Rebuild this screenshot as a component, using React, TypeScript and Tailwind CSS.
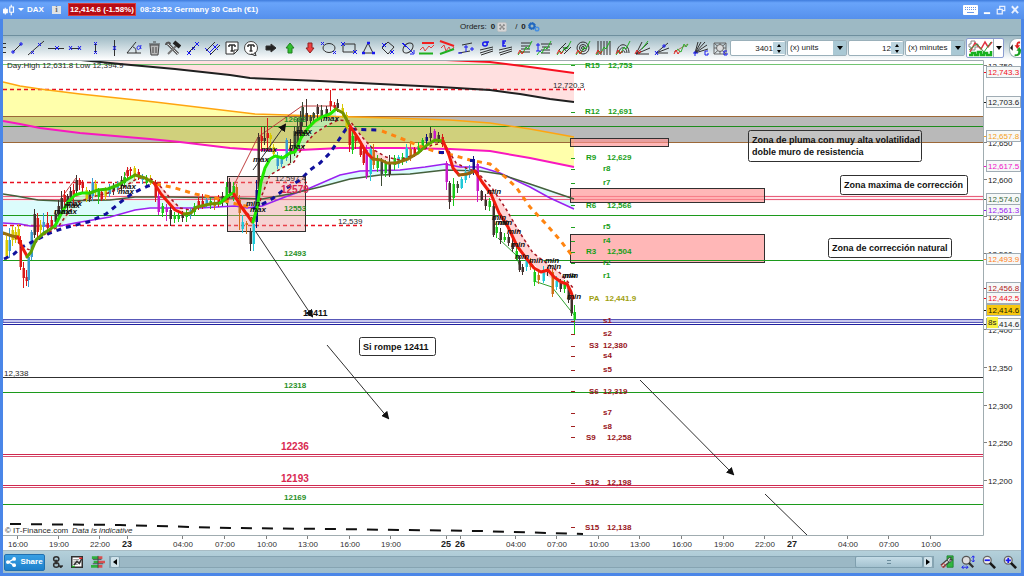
import type { ReactNode } from "react";

type Pt = [number, number];
type Candle = [x: number, high: number, top: number, bottom: number, low: number, color: string];

const K = "#40302c";
const R = "#d81818";
const G = "#18c818";
const B = "#3a9bd0";
const Y = "#d8c800";
const N = "#10107c";
const M = "#c818c8";
const O = "#d07018";
const C = "#20c8d8";
const D = "#3c4a34";

const candles: Candle[] = [
  [6, 236, 240, 256, 260, Y], [9, 228, 240, 251, 258, B], [12, 226, 230, 240, 246, Y], [15, 227, 232, 240, 243, Y], [18, 224, 229, 236, 244, Y],
  [20, 236, 240, 267, 270, R], [23, 262, 268, 278, 288, R], [26, 270, 277, 281, 286, R], [28, 253, 257, 280, 287, B],
  [31, 230, 232, 257, 260, B], [34, 209, 214, 235, 238, K], [37, 213, 218, 232, 240, R], [40, 220, 225, 230, 234, Y], [43, 213, 222, 227, 232, B], [47, 212, 223, 228, 235, R],
  [51, 216, 220, 227, 230, R], [55, 210, 214, 222, 226, K], [58, 200, 206, 217, 221, K], [61, 191, 198, 209, 213, K], [64, 190, 195, 202, 206, R], [67, 194, 196, 206, 210, K],
  [70, 187, 191, 200, 203, K], [73, 184, 190, 195, 204, R], [76, 175, 180, 191, 194, K], [79, 178, 180, 185, 190, R], [82, 180, 183, 188, 193, R], [86, 187, 190, 199, 202, Y],
  [89, 190, 192, 199, 202, K], [92, 178, 182, 196, 201, B], [95, 180, 184, 192, 197, Y], [98, 188, 191, 197, 204, G], [101, 189, 192, 199, 201, R], [105, 187, 190, 196, 200, Y],
  [109, 184, 187, 194, 197, B], [113, 183, 186, 191, 195, K], [117, 181, 184, 188, 192, B], [121, 176, 180, 186, 190, K], [124, 172, 177, 183, 187, G], [127, 167, 170, 176, 180, R],
  [130, 167, 169, 171, 178, R], [134, 166, 168, 176, 179, Y], [138, 169, 172, 177, 180, R], [142, 174, 177, 180, 184, B], [146, 175, 178, 183, 187, G], [150, 175, 178, 183, 185, Y],
  [155, 180, 184, 197, 202, R], [158, 190, 196, 212, 215, M], [162, 203, 206, 213, 217, G], [166, 204, 208, 212, 221, M], [170, 206, 210, 219, 226, K], [174, 212, 215, 219, 223, G],
  [178, 210, 216, 219, 222, G], [182, 211, 214, 218, 222, K], [186, 210, 213, 217, 222, G], [190, 208, 210, 215, 219, B], [194, 203, 206, 212, 216, G], [198, 197, 201, 208, 210, R],
  [202, 194, 201, 205, 209, R], [206, 195, 200, 206, 208, B], [210, 198, 201, 205, 209, G], [214, 198, 202, 206, 210, O], [218, 195, 199, 204, 207, R], [222, 192, 196, 202, 206, K],
  [226, 182, 187, 199, 204, G], [229, 178, 182, 193, 198, K], [233, 182, 186, 198, 201, G], [236, 184, 187, 196, 199, O], [239, 195, 200, 213, 230, O], [242, 215, 222, 229, 233, C],
  [246, 221, 223, 225, 234, O], [250, 228, 231, 244, 251, K], [253, 220, 224, 244, 251, C], [256, 180, 190, 222, 228, N], [258, 133, 137, 189, 205, K], [261, 127, 136, 141, 150, R],
  [264, 127, 138, 141, 145, K], [267, 118, 133, 138, 150, R], [270, 133, 135, 139, 148, Y], [273, 144, 147, 154, 158, Y], [277, 152, 158, 166, 169, B], [281, 155, 158, 164, 167, B], [286, 138, 140, 158, 161, B],
  [290, 139, 148, 154, 163, K], [294, 126, 131, 153, 156, D], [297, 118, 126, 146, 150, D], [300, 111, 118, 133, 138, K], [302, 102, 107, 122, 126, D], [306, 99, 113, 121, 126, K],
  [310, 115, 117, 121, 124, D], [313, 112, 113, 118, 122, D], [317, 104, 107, 114, 118, K], [321, 105, 110, 118, 122, D], [326, 106, 109, 115, 119, K], [330, 90, 101, 106, 111, R],
  [334, 102, 105, 108, 111, R], [337, 99, 103, 108, 112, K], [342, 104, 108, 113, 118, Y], [346, 112, 115, 129, 132, Y], [349, 124, 128, 145, 152, R], [352, 130, 136, 150, 154, G],
  [355, 132, 136, 141, 149, R], [360, 141, 146, 155, 157, R], [363, 145, 151, 163, 165, R], [366, 145, 150, 176, 179, M], [370, 145, 149, 174, 181, C], [373, 144, 150, 165, 169, O],
  [377, 155, 160, 168, 172, G], [381, 158, 161, 174, 186, D], [385, 160, 163, 173, 177, G], [389, 155, 163, 174, 177, K], [394, 155, 158, 165, 170, G], [398, 155, 157, 164, 168, C],
  [402, 153, 157, 162, 165, G], [406, 144, 148, 160, 163, C], [410, 144, 149, 156, 161, O], [414, 147, 149, 154, 157, R], [418, 142, 146, 150, 154, G], [422, 138, 140, 146, 150, G],
  [426, 134, 137, 141, 148, N], [430, 127, 133, 138, 142, K], [434, 129, 131, 139, 143, M], [438, 132, 135, 139, 143, K], [442, 134, 137, 141, 147, R], [446, 161, 163, 182, 190, M],
  [449, 181, 183, 202, 209, K], [453, 178, 184, 198, 206, G], [457, 181, 184, 188, 193, D], [461, 177, 179, 188, 189, C], [465, 168, 172, 180, 183, C], [469, 165, 170, 175, 178, B],
  [473, 156, 160, 171, 175, N], [477, 162, 164, 191, 202, M], [481, 190, 191, 200, 201, K], [485, 194, 200, 206, 210, K], [489, 198, 201, 207, 211, G], [493, 200, 206, 235, 237, K],
  [496, 222, 227, 233, 238, G], [500, 228, 232, 240, 244, K], [504, 233, 237, 240, 242, G], [508, 234, 237, 243, 246, K], [512, 238, 243, 249, 252, K], [516, 246, 251, 258, 260, G],
  [519, 256, 261, 270, 272, K], [522, 264, 267, 272, 275, K], [526, 256, 259, 267, 271, C], [530, 258, 261, 267, 270, O], [534, 268, 272, 282, 286, G], [538, 270, 275, 280, 284, O],
  [543, 266, 270, 281, 283, C], [547, 267, 269, 272, 276, K], [552, 268, 272, 294, 297, O], [556, 276, 281, 287, 290, C], [560, 279, 283, 289, 292, K], [564, 280, 283, 289, 293, G],
  [568, 284, 288, 300, 303, K], [571, 295, 297, 313, 316, K], [574, 305, 312, 320, 334, G],
];

const line = (pts: Pt[]) => pts.map((p) => p.join(",")).join(" ");
const area = (a: Pt[], b: Pt[]) => line([...a, ...[...b].reverse()]);

const redTop: Pt[] = [[446, 60], [490, 62], [530, 67], [574, 73]];
const blackTop: Pt[] = [[81, 60], [120, 64], [175, 69], [230, 75], [250, 78], [320, 81], [380, 84], [440, 87], [490, 90], [520, 94], [550, 99], [574, 102]];
const orange: Pt[] = [[3, 82], [20, 86], [40, 89], [80, 94], [155, 102], [230, 111], [255, 114], [320, 116], [390, 118], [450, 120], [490, 123], [530, 129], [574, 137]];
const magenta: Pt[] = [[3, 121], [20, 124], [40, 128], [80, 133], [150, 139], [180, 142], [230, 148], [260, 150], [300, 150], [340, 148], [400, 148], [450, 149], [490, 151], [530, 158], [574, 167]];
const purple: Pt[] = [[3, 223], [20, 224], [30, 226], [60, 226], [75, 223], [110, 217], [135, 210], [150, 208], [200, 208], [235, 206], [247, 208], [262, 206], [285, 197], [310, 188], [340, 175], [360, 171], [400, 170], [425, 167], [445, 164], [460, 167], [480, 167], [500, 173], [530, 187], [550, 198], [574, 209]];
const olive: Pt[] = [[3, 194], [16, 196], [38, 200], [60, 201], [110, 200], [135, 197], [170, 197], [230, 198], [262, 199], [290, 194], [320, 187], [350, 179], [380, 175], [410, 174], [445, 170], [480, 171], [500, 174], [530, 184], [574, 199]];

const average: { color: string; pts: Pt[] }[] = [
  { color: "#98700c", pts: [[3, 233], [12, 236], [18, 237]] },
  { color: "#f01c0c", pts: [[18, 237], [22, 247], [27, 256]] },
  { color: "#5fa000", pts: [[27, 257], [31, 252], [36, 240], [44, 233], [55, 226]] },
  { color: "#20e800", pts: [[55, 226], [61, 214], [68, 202], [75, 195], [82, 193], [90, 193]] },
  { color: "#38c000", pts: [[90, 193], [98, 190], [108, 189], [118, 185], [128, 179], [135, 175]] },
  { color: "#749000", pts: [[135, 175], [145, 178], [154, 183]] },
  { color: "#f01c0c", pts: [[154, 183], [161, 194], [168, 202], [175, 210], [184, 214]] },
  { color: "#749000", pts: [[184, 214], [191, 213], [197, 207], [210, 204], [220, 203], [226, 199]] },
  { color: "#20e800", pts: [[220, 203], [226, 197], [233, 193]] },
  { color: "#f01c0c", pts: [[234, 194], [240, 205], [248, 216], [252, 222]] },
  { color: "#20e800", pts: [[253, 222], [257, 208], [261, 182], [265, 168], [270, 159], [275, 156], [283, 158], [290, 153], [295, 152], [301, 138], [308, 128], [315, 121], [322, 117], [330, 114], [336, 109]] },
  { color: "#749000", pts: [[336, 109], [343, 113], [350, 126]] },
  { color: "#f01c0c", pts: [[350, 126], [358, 138], [366, 152], [373, 159]] },
  { color: "#98700c", pts: [[373, 159], [381, 160], [387, 163], [396, 163], [408, 159], [418, 153]] },
  { color: "#58a800", pts: [[418, 153], [427, 145], [435, 140], [443, 141]] },
  { color: "#f01c0c", pts: [[443, 141], [449, 155], [453, 168], [459, 175]] },
  { color: "#98600c", pts: [[459, 175], [467, 174], [475, 171]] },
  { color: "#f01c0c", pts: [[475, 171], [482, 182], [491, 194], [499, 213], [508, 227], [517, 246], [526, 258], [534, 268], [541, 272], [548, 270], [554, 277], [561, 282], [567, 284], [571, 292], [573, 298]] },
];

const fastDots: Pt[][] = [
  [[3, 234], [14, 236], [22, 247], [30, 250], [40, 237], [58, 227], [68, 213], [78, 202], [92, 197], [108, 193], [124, 187], [138, 178], [150, 178], [160, 186], [170, 198], [180, 208], [190, 210], [204, 206], [222, 202], [234, 196], [246, 212], [254, 220], [262, 195], [270, 175], [282, 168], [294, 162], [302, 148], [314, 134], [326, 126], [338, 120], [350, 121], [362, 137], [374, 150], [386, 157], [400, 160], [416, 154], [432, 145], [444, 143], [456, 163], [466, 168], [477, 172], [492, 188], [506, 209], [520, 233], [533, 253], [545, 262], [560, 273], [574, 289]],
];
const blueDots: Pt[][] = [
  [[4, 259], [14, 254], [22, 247], [34, 241], [50, 233], [64, 228], [88, 222], [106, 214], [122, 201], [133, 193], [148, 186], [155, 184]],
  [[253, 209], [272, 199], [285, 189], [300, 180], [310, 170], [320, 163], [330, 153], [338, 141], [346, 129], [378, 130]],
];
const orangeDots: Pt[][] = [
  [[156, 184], [175, 188], [195, 194], [216, 198], [232, 203], [250, 207]],
  [[382, 131], [400, 138], [422, 147], [434, 151], [452, 155], [470, 160], [490, 164], [504, 176], [516, 187], [530, 207], [545, 223], [560, 240], [574, 258]],
];

const marks: [number, number, string][] = [
  [120, 189, "max"], [118, 194, "max"], [66, 206, "max"], [64, 208, "max"], [54, 214, "max"], [61, 214, "max"],
  [261, 152, "max"], [253, 162, "max"], [246, 206, "min"], [250, 212, "max"], [296, 134, "max"], [294, 136, "max"], [289, 149, "max"], [323, 121, "max"],
  [487, 194, "min"], [492, 220, "min"], [495, 225, "min"], [498, 225, "min"], [507, 234, "min"], [511, 247, "min"], [515, 259, "min"], [529, 263, "min"], [545, 263, "min"], [547, 269, "min"], [562, 278, "min"], [564, 278, "min"], [567, 299, "min"],
];

const pivots: [number, number, string, number, string][] = [
  [585, 68, "R15", 608, "12,753"], [585, 114, "R12", 608, "12,691"], [586, 160, "R9", 607, "12,629"], [586, 208, "R6", 607, "12,566"], [586, 254, "R3", 607, "12,504"],
  [589, 348, "S3", 603, "12,380"], [589, 394, "S6", 603, "12,319"], [586, 440, "S9", 607, "12,258"], [585, 485, "S12", 607, "12,198"], [585, 530, "S15", 607, "12,138"],
];
const minors: [number, string][] = [
  [171, "r8"], [185, "r7"], [229, "r5"], [243, "r4"], [265, "r2"], [278, "r1"], [323, "s1"], [336, "s2"], [358, "s4"], [372, "s5"], [415, "s7"], [429, "s8"],
];
const ticksGreen = [65, 112, 158, 169, 183, 205, 227, 241, 252, 263, 276];
const ticksRed = [321, 334, 346, 356, 370, 391, 413, 426, 437, 483, 527];

const levels: [number, string][] = [
  [64, "#72c472"], [126, "#1c8c1c"], [215, "#1c9a1c"], [260, "#1c9a1c"], [392, "#1c9a1c"], [504, "#1c9a1c"],
  [377, "#303030"], [454, "#d02850"], [456, "#d85070"], [485, "#d02850"], [487, "#d85070"],
];

const prices: [number, string][] = [
  [66, "12,750"], [143, "12,650"], [180, "12,600"], [217, "12,550"], [254, "12,500"], [330, "12,400"],
  [368, "12,350"], [406, "12,300"], [443, "12,250"], [481, "12,200"],
];
const priceTags: [number, string, string, string][] = [
  [72, "12,743.3", "#f01020", "#f6f8f8"], [102, "12,703.6", "#202020", "#f6f8f8"], [136, "12,657.8", "#f5a020", "#f6f8f8"], [166, "12,617.5", "#f010c8", "#f6f8f8"],
  [199, "12,574.0", "#3c6a3c", "#f6f8f8"], [210, "12,561.3", "#9818f0", "#f6f8f8"], [259, "12,493.9", "#ff8020", "#f6f8f8"], [288, "12,456.8", "#b01820", "#f6f8f8"],
  [298, "12,442.5", "#f01020", "#f6f8f8"], [324, "12,414.6", "#202020", "#f6f8f8"], [310, "12,414.6", "#201800", "#f8c810"],
];
const times: [number, string][] = [
  [18, "16:00"], [59, "19:00"], [100, "22:00"], [183, "04:00"], [225, "07:00"], [267, "10:00"], [308, "13:00"], [350, "16:00"], [391, "19:00"], [516, "04:00"], [557, "07:00"],
  [599, "10:00"], [640, "13:00"], [682, "16:00"], [724, "19:00"], [765, "22:00"], [848, "04:00"], [889, "07:00"], [931, "10:00"],
];
const days: [number, string][] = [[127, "23"], [446, "25"], [460, "26"], [792, "27"]];

const arrows: [number, number, number, number][] = [
  [253, 170, 285, 125], [256, 232, 312, 316], [327, 345, 388, 418], [640, 380, 733, 474],
];

function Note({ x, y, w, h, opacity = 1, lines }: { x: number; y: number; w: number; h: number; opacity?: number; lines: string[] }) {
  return (
    <g>
      <rect x={x} y={y} width={w} height={h} rx="2" fill="#ffffff" fillOpacity={opacity} stroke="#303030" />
      {lines.map((t, i) => (
        <text key={t} x={x + 3.5} y={y + 12.5 + i * 12} fontSize="9" fontWeight="700" fill="#101010">{t}</text>
      ))}
    </g>
  );
}

function Chart() {
  return (
    <svg viewBox="3 60 1018 490" className="block h-auto w-full bg-white" role="img" aria-label="Germany 30 Cash 12 minute chart" fontFamily="'Liberation Sans', Arial, sans-serif" fontSize="8">
      <defs>
        <marker id="head" viewBox="0 0 8 8" refX="6" refY="4" markerWidth="8" markerHeight="8" markerUnits="userSpaceOnUse" orient="auto">
          <path d="M0 0 L8 4 L0 8Z" fill="#101010" />
        </marker>
        <clipPath id="plot"><rect x="3" y="60" width="980" height="475" /></clipPath>
      </defs>
      <g clipPath="url(#plot)">
        <polygon points={`81,60 ${line(redTop)} ${line([...blackTop].reverse())}`} fill="#ffe0e0" />
        <rect x="3" y="116" width="980" height="27" fill="#b9b9b9" />
        <polygon points={area(orange, magenta)} fill="#ffff00" opacity="0.33" />
        <polygon points={area(purple, olive)} fill="#dcfcfc" />
        <path d="M3 116.500H983M3 142.500H983" stroke="#9c6838" />
        {levels.map(([y, c]) => <path key={y} d={`M3 ${y + 0.5}H983`} stroke={c} />)}
        <rect x="3" y="195" width="980" height="6" fill="#ffe4ea" opacity="0.6" />
        <path d="M3 196.500H983M3 199.500H983" stroke="#e8607c" />
        <rect x="3" y="319.500" width="980" height="3" fill="#c8c8f0" stroke="#5858b8" />
        <path d="M3 324.500H983" stroke="#2020a0" />
        <path d="M3 89.500H585M3 182.500H307M3 225.500H362" stroke="#e81020" strokeWidth="1.500" strokeDasharray="4 3" />
        <path d="M10 524 L120 525 L230 528 L330 529 L480 531 L583 534" fill="none" stroke="#101010" strokeWidth="2" strokeDasharray="11 10" />

        <polygon points="57,226 64,210 76,197 92,193 134,176 138,180 108,194 80,202 62,224" fill="#c8f4d0" opacity="0.8" />
        <polygon points="254,220 262,180 270,160 282,158 295,152 308,129 336,110 336,121 314,134 302,148 292,163 270,175" fill="#b8f4c0" opacity="0.7" />
        <polygon points="154,183 175,210 186,213 175,203 162,187" fill="#ffd4d4" />
        <polygon points="346,117 360,143 375,159 392,161 374,150 362,136" fill="#ffd4d4" />
        <polygon points="443,141 453,170 466,168 477,172 499,213 517,246 540,271 572,292 560,273 533,253 506,209 477,172 455,163" fill="#ffd4d4" />

        <rect x="227.500" y="176.500" width="78" height="55" fill="#e89090" fillOpacity="0.4" stroke="#303030" />
        <g fill="#ff9090" fillOpacity="0.65" stroke="#303030">
          <rect x="570.500" y="138.500" width="98" height="8" />
          <rect x="570.500" y="188.500" width="194" height="14" />
          <rect x="570.500" y="234.500" width="194" height="28" />
        </g>
        <path d="M571 260.500H765" stroke="#1c9a1c" />

        <polyline points={line(redTop)} fill="none" stroke="#f81020" strokeWidth="2" />
        <polyline points={line(blackTop)} fill="none" stroke="#202020" strokeWidth="2" />
        <polyline points={line(orange)} fill="none" stroke="#ffa510" strokeWidth="1.500" />
        <polyline points={line(magenta)} fill="none" stroke="#f818c0" strokeWidth="2" />
        <polyline points={line(purple)} fill="none" stroke="#9a20f0" strokeWidth="1.500" />
        <polyline points={line(olive)} fill="none" stroke="#44603c" strokeWidth="1.500" />

        <path d="M62 197 L76 178 M122 183 L128 168 M233 187 L258 137 L302 106 L335 106" fill="none" stroke="#c04040" />
        <path d="M498 238 L516 255 L520 267 M534 281 L552 287 L574 315" fill="none" stroke="#30a030" />
        {candles.map(([x, hi, top, bottom, lo, c], i) => (
          <g key={i}>
            <path d={`M${x + 0.5} ${hi}V${lo}`} stroke={c} />
            <rect x={x - 0.5} y={top} width="2.500" height={bottom - top} fill={c} />
          </g>
        ))}
        {blueDots.map((p, i) => <polyline key={i} points={line(p)} fill="none" stroke="#10109c" strokeWidth="3" strokeDasharray="5 5" />)}
        {orangeDots.map((p, i) => <polyline key={i} points={line(p)} fill="none" stroke="#ff8410" strokeWidth="3" strokeDasharray="5 5" />)}
        <path d="M439 152.500h5M470 160.500h5" stroke="#10109c" strokeWidth="3" />
        {fastDots.map((p, i) => <polyline key={i} points={line(p)} fill="none" stroke="#a81420" strokeWidth="1.500" strokeDasharray="3 3" />)}
        {average.map((a, i) => <polyline key={i} points={line(a.pts)} fill="none" stroke={a.color} strokeWidth="3" strokeLinejoin="round" strokeLinecap="round" />)}

        {arrows.map(([a, b, c, d]) => <path key={a} d={`M${a} ${b}L${c} ${d}`} stroke="#303030" markerEnd="url(#head)" />)}
        <path d="M765 494L807 535" stroke="#303030" />

        <path d={ticksGreen.map((y) => `M571 ${y + 0.5}h4`).join("")} stroke="#20a020" />
        <path d={ticksRed.map((y) => `M571 ${y + 0.5}h4`).join("")} stroke="#a02020" />
      </g>

      <g fontWeight="700" fontStyle="italic" fill="#101010">
        {marks.map(([x, y, t], i) => <text key={i} x={x} y={y}>{t}</text>)}
      </g>
      <g fontWeight="700">
        {pivots.map(([x, y, n, vx, v]) => (
          <g key={n} fill={n[0] === "R" ? "#18a018" : "#981420"}>
            <text x={x} y={y}>{n}</text>
            <text x={vx} y={y}>{v}</text>
          </g>
        ))}
        {minors.map(([y, t]) => <text key={t} x="603" y={y} fill={t[0] === "r" ? "#18a018" : "#981420"}>{t}</text>)}
        <g fill="#a0a010"><text x="589" y="301">PA</text><text x="605" y="301">12,441.9</text></g>
        <g fill="#289028">
          <text x="284" y="122">12682</text>
          <text x="284" y="211">12553</text>
          <text x="284" y="256">12493</text>
          <text x="284" y="388">12318</text>
          <text x="284" y="500">12169</text>
        </g>
        <g fill="#d82850" fontSize="10">
          <text x="281" y="193">12579</text>
          <text x="281" y="450">12236</text>
          <text x="281" y="482">12193</text>
        </g>
        <text x="303" y="316" fontSize="9" fill="#101010">12411</text>
      </g>
      <g fill="#282828">
        <text x="7" y="68">Day:High 12,631.8 Low 12,394.9</text>
        <text x="553" y="88">12,720.3</text>
        <text x="275" y="181">12,597.4</text>
        <text x="338" y="224">12,539</text>
        <text x="4" y="376">12,338</text>
        <text x="5" y="533">© IT-Finance.com</text>
        <text x="72" y="533" fontStyle="italic">Data is indicative</text>
      </g>

      <Note x={748.5} y={130.5} w={173} h={31} opacity={0.15} lines={["Zona de pluma con muy alta volatilidad", "doble muro de resistencia"]} />
      <Note x={840.5} y={175.5} w={127} h={19} lines={["Zona maxima de corrección"]} />
      <Note x={828.5} y={238.5} w={123} h={19} lines={["Zona de corrección natural"]} />
      <Note x={359.5} y={337.5} w={76} h={18} lines={["Si rompe 12411"]} />

      <path d="M3 60.500H983.500V535.500H3" fill="none" stroke="#a0acb0" />
      {prices.map(([y, t]) => (
        <g key={t}>
          <path d={`M984 ${y - 0.5}h3`} stroke="#808080" />
          <text x="988" y={y + 3} fill="#202020">{t}</text>
        </g>
      ))}
      {priceTags.map(([y, t, c, bg]) => (
        <g key={t + y}>
          <path d={`M984 ${y + 0.5}h3`} stroke={c} />
          <rect x="986.500" y={y - 5.5} width="34" height="11" fill={bg} stroke="#a0acb4" />
          <text x="988" y={y + 3} fill={c}>{t}</text>
        </g>
      ))}
      <rect x="987" y="317" width="11" height="11" fill="#f8f040" />
      <text x="988" y="325" fill="#202020">8s</text>
      {times.map(([x, t]) => (
        <g key={x}>
          <path d={`M${x - 0.5} 536v3`} stroke="#808080" />
          <text x={x} y="547" textAnchor="middle" fill="#303030">{t}</text>
        </g>
      ))}
      {days.map(([x, t]) => (
        <g key={x}>
          <path d={`M${x + 0.5} 536v3`} stroke="#808080" />
          <text x={x} y="547" textAnchor="middle" fontWeight="700" fontSize="9" fill="#202020">{t}</text>
        </g>
      ))}
    </svg>
  );
}

const blue = "#1818f0";
const zig = <path d="M1 15l3-4 2 2 3-6 2 2 4-8" stroke="#20b020" />;
const zigRed = <path d="M1 14l2-4 2 4 2-3" stroke="#e02020" />;

const tools: [string, ReactNode][] = [
  ["Segment", <><path d="M4 12l8-8" /><path d="M2 12h4M4 10v4M10 4h4M12 2v4" stroke={blue} /></>],
  ["Line", <><path d="M0 15L16 1" /><path d="M3 11l3 3M6 11l-3 3M10 3l3 3M13 3l-3 3" stroke={blue} /></>],
  ["Horizontal line", <><path d="M0 8.500h16" /><path d="M7 6l4 4M11 6l-4 4" stroke={blue} /></>],
  ["Horizontal segment", <><path d="M3 8.500h10" /><path d="M2 6l3 4M5 6l-3 4M11 6l3 4M14 6l-3 4" stroke={blue} /></>],
  ["Vertical segment", <><path d="M8.500 4v9" /><path d="M7 2l3 3M10 2l-3 3M7 11l3 3M10 11l-3 3" stroke={blue} /></>],
  ["Vertical line", <><path d="M8.500 0v16" /><path d="M7 6l3 4M10 6l-3 4" stroke={blue} /></>],
  ["Angle", <><path d="M10 2L1 13h14M7 7c3 1 3 3 3 6" /><path d="M15 5c-1 6-4 5-4 3s3-4 4 1" stroke={blue} /></>],
  ["Delete", <><path d="M4 5h9l-1 10H5z" fill="#b8b8b8" stroke="#444" /><path d="M3 4h11M7 2h3M7 7v6M10 7v6" stroke="#444" /></>],
  ["Settings", <><path d="M3 4l10 10" stroke="#555" strokeWidth="3" /><path d="M3 4l10 10" stroke="#ddd" /><path d="M13 4L3 14" stroke="#777" strokeWidth="2" /><path d="M9 2l6 5" stroke="#222" strokeWidth="4" /><path d="M1 5c0-3 4-3 4-1" stroke="#555" strokeWidth="2" /></>],
  ["Regression", <><path d="M4 12l8-8" /><path d="M2 11l4 4M6 11l-4 4M10 2l4 4M14 2l-4 4M7 7l3 3M10 7l-3 3" stroke={blue} /></>],
  ["Parallel lines", <><path d="M2 11L11 2M6 15l10-10" /><path d="M1 8l6 6M5 13l9-9M9 5l5 5" stroke={blue} /></>],
  ["Text", <><path d="M2 2h12v8l-4 4H2z" fill="#fff" /><path d="M14 10h-4v4" /><path d="M5 5h6M8 5v6M6.500 11h3M5 5v2M11 5v2" strokeWidth="1.500" /></>],
  ["Text bubble", <><circle cx="8" cy="8" r="6.500" fill="#fff" stroke="#444" /><path d="M5 5h6M8 5v6M6.500 11h3M5 5v2M11 5v2" strokeWidth="1.500" /><path d="M8 14l5 2-1-4" /></>],
  ["Arrow right", <path d="M3 6h5V4l5 4-5 4v-2H3z" fill="#222" />],
  ["Arrow up", <path d="M8 3l4 5h-2v5H6V8H4z" fill="#30c030" stroke="#208020" />],
  ["Arrow down", <path d="M8 13l4-5h-2V3H6v5H4z" fill="#f04040" stroke="#902020" />],
  ["Ellipse", <><ellipse cx="8" cy="8" rx="6" ry="4.500" /><path d="M0 2l3 3M3 2l-3 3M12 11l3 3M15 11l-3 3" stroke={blue} /></>],
  ["Rectangle", <><path d="M2 4h12v8H2z" /><path d="M0 2l4 4M4 2L0 6M12 10l4 4M16 10l-4 4" stroke={blue} /></>],
  ["Triangle", <><path d="M8 3l5 10H3z" /><path d="M7 3h3M2 13h3M12 13h3" stroke={blue} strokeWidth="2.500" /></>],
  ["Rotated rectangle", <><path d="M8 2l6 5-6 7-6-6z" /><path d="M2 3l4 4M6 3L2 7M10 10l4 4M14 10l-4 4" stroke={blue} /></>],
  ["Rotated ellipse", <><ellipse cx="8" cy="8" rx="6" ry="4" transform="rotate(-45 8 8)" /><path d="M2 3l4 4M3 3l10 10M10 14h4v-4" stroke={blue} /></>],
  ["Support", <><path d="M1 10l3-3 2 4 4-5 2 2 3-3" stroke="#e04040" /><path d="M3 3h12" stroke="#f02020" strokeWidth="2" /><path d="M0 13.500h14" stroke="#20b020" strokeWidth="2" /></>],
  ["Wedge", <><path d="M2 8l3-3 2 6 3-4 2 4 3-4" stroke="#e04040" /><path d="M1 1l14 5" stroke="#f02020" strokeWidth="2" /><path d="M1 14l14-5" stroke="#20b020" strokeWidth="2" /></>],
  ["Channel", <><path d="M4 5l10-2M1 13l11-2" /><path d="M8 5v7M6 7h4M12 9h4M14 7v4M0 13h4" stroke={blue} /></>],
  ["Standard deviation channel", <><path d="M2 10l13-3M2 13l13-4M3 15l12-4" /><path d="M11 2H7C4 2 4 6 7 6s3-4 0-4" stroke={blue} strokeWidth="1.500" /></>],
  ["Standard error channel", <><path d="M2 10l13-3M2 13l13-4M3 15l12-4" /><path d="M9 1H6v2h2H6v3h3" stroke={blue} strokeWidth="1.500" /></>],
  ["Fibonacci retracement", <><path d="M4 3h10M4 6h9M4 9h9M3 12h10" />{zig}{zigRed}</>],
  ["Fibonacci extension", <><path d="M5 4h11M6 7h8M5 10h9M5 13h9" />{zig}<path d="M2 3v8M0 5h4M0 11h5" stroke={blue} /></>],
  ["Pitchfork", <><path d="M3 10l7-7M5 13l8-8M8 14l7-7M6 6l5 6" />{zig}{zigRed}</>],
  ["Fibonacci circles", <><circle cx="8" cy="8" r="6" /><circle cx="8" cy="8" r="3.500" /><circle cx="8" cy="8" r="1.500" />{zig}{zigRed}</>],
  ["Fibonacci time zones", <><path d="M3 1v14M6 1v14M9 1v14M12 1v14M15 1v14" />{zig}{zigRed}</>],
  ["Fibonacci arcs", <><path d="M2 13c0-11 12-11 12 0M4 13c0-7 8-7 8 0M7 13c0-3 3-3 3 0" />{zig}{zigRed}</>],
  ["Fan lines", <><path d="M2 14L14 3M2 14l14-6M2 14h13M2 14L8 2" />{zigRed}<path d="M8 9l6-8" stroke="#20b020" /></>],
  ["Speed lines", <><path d="M2 13L14 3M2 13l13-5M2 13h12" /><path d="M1 11l3 4M4 11l-3 4M8 6h4M10 4v4" stroke={blue} /></>],
  ["Elliott wave", <><path d="M1 12l14-8" stroke="#a07050" />{zigRed}<path d="M4 9l4 3 3-8 2 3 2-3" stroke="#30b030" /></>],
  ["Gann fan", <><path d="M2 13L5 2M2 13L8 2M2 13L12 2M2 13l12-8M2 13l13-4" /><path d="M0 13h5M2 11v5M15 11h-3v4h3v-2" stroke={blue} /></>],
  ["Gann square", <><path d="M2 3h12v11H2zM2 3l12 11M14 3L2 14M8 3v11M2 8h12" stroke="#666" /><circle cx="8" cy="8" r="3.500" fill="#ddd" stroke="#666" /><path d="M15 11h-3v4h3v-2" stroke={blue} /></>],
];

function Icon({ children, className = "size-4" }: { children: ReactNode; className?: string }) {
  return <svg viewBox="0 0 16 16" className={`${className} shrink-0`} fill="none" stroke="#303030" aria-hidden="true">{children}</svg>;
}

function NumberBox({ label, value }: { label: string; value: string }) {
  return (
    <div className="flex h-4 w-14 shrink-0 items-center rounded-xs border border-[#9ab0ba] bg-white">
      <input aria-label={label} defaultValue={value} className="h-full w-10 min-w-0 flex-1 bg-transparent text-right text-[8px] outline-none" />
      <div className="flex h-3 w-3 flex-col bg-[#bcd4de]">
        <button aria-label={`Increase ${label}`} className="flex flex-1 items-center justify-center"><svg viewBox="0 0 4 3" className="h-[3px] w-1"><path d="M0 3L2 0l2 3z" /></svg></button>
        <button aria-label={`Decrease ${label}`} className="flex flex-1 items-center justify-center"><svg viewBox="0 0 4 3" className="h-[3px] w-1"><path d="M0 0l2 3 2-3z" /></svg></button>
      </div>
    </div>
  );
}

function UnitSelect({ label, text }: { label: string; text: string }) {
  return (
    <div className="grid h-4 w-[60px] shrink-0 grid-cols-[1fr_13px] items-center rounded-xs border border-[#9ab0ba] bg-white">
      <select aria-label={label} className="col-span-2 col-start-1 row-start-1 h-full w-full appearance-none bg-transparent pl-0.5 text-[8px] outline-none">
        <option>{text}</option>
      </select>
      <span className="pointer-events-none col-start-2 row-start-1 flex h-3.5 items-center justify-center bg-[#a9c8d4]">
        <svg viewBox="0 0 6 4" className="h-1 w-1.5"><path d="M0 0h6L3 4z" /></svg>
      </span>
    </div>
  );
}

function TitleBar() {
  return (
    <header className="flex h-[19px] items-center bg-linear-to-b from-[#3f7cdc] via-[#69a4fa] via-15% to-[#5590ec] pr-1 pl-[3px] text-[8px] font-bold text-white">
      <Icon className="h-4 w-3"><path d="M3 5v9M11 1v14" stroke="#fff" strokeWidth="1.500" /><path d="M0 7h6v5H0z" fill="#fff" stroke="#fff" /><path d="M9 4h5v7H9z" stroke="#fff" fill="#6aa0f4" strokeWidth="1.500" /></Icon>
      <svg viewBox="0 0 6 3" className="ml-[3px] h-[3px] w-1.5" fill="#fff"><path d="M0 0h6L3 3z" /></svg>
      <span className="ml-[3px]">DAX</span>
      <button aria-label="Information" className="ml-2 flex h-2 w-[9px] items-center justify-center bg-[#dfe3e6] font-serif text-[8px] leading-none text-[#666]">i</button>
      <span className="ml-[7px] border border-[#d84040] bg-[#b80c14] px-px leading-[11px]">12,414.6 (-1.58%)</span>
      <span className="ml-1">08:23:52 Germany 30 Cash (€1)</span>
      <div className="ml-auto flex items-center gap-1">
        <button aria-label="Keyboard">
          <svg viewBox="0 0 15 10" className="h-2.5 w-[15px]"><rect width="15" height="10" rx="1" fill="#fff" /><path d="M2 2.500h11M2 4.500h11" stroke="#6898e8" strokeDasharray="1 1" /><path d="M4 7.500h7" stroke="#6898e8" /></svg>
        </button>
        <button aria-label="Minimize"><Icon className="size-2.5"><path d="M3 13h10" stroke="#fff" strokeWidth="3" /></Icon></button>
        <button aria-label="Restore"><Icon className="size-2.5"><path d="M6 6V2h8v7h-4M2 7h8v7H2z" stroke="#e8f0ff" strokeWidth="2" /></Icon></button>
        <button aria-label="Close"><Icon className="size-2.5"><path d="M3 2l10 11M13 2L3 13" stroke="#e8f0ff" strokeWidth="3" /></Icon></button>
      </div>
    </header>
  );
}

function OrdersBar() {
  return (
    <div className="flex h-4 items-center bg-[#9db9c4] pl-[457px] text-[8px] text-[#202020]">
      <span>Orders:</span>
      <b className="ml-1">0</b>
      <button aria-label="Cancel orders" className="ml-0.5"><Icon className="size-2.5"><rect x="1" y="1" width="14" height="14" rx="2" fill="#d8d8d8" stroke="#c0c0c0" /><path d="M4 4l8 8M12 4l-8 8" stroke="#888" strokeWidth="3" strokeDasharray="3 1" /></Icon></button>
      <span className="ml-2">/</span>
      <b className="ml-1">0</b>
      <button aria-label="Order settings" className="ml-0.5"><svg viewBox="0 0 12 10" className="h-2.5 w-3" fill="none" stroke="#2068c0"><circle cx="4" cy="4" r="2.500" strokeWidth="2" /><circle cx="4" cy="4" r="3.500" strokeDasharray="1.300 1.400" /><circle cx="9" cy="7" r="1.800" stroke="#4890e0" strokeWidth="1.500" /></svg></button>
    </div>
  );
}

function Toolbar() {
  return (
    <div className="flex h-[25px] items-center overflow-hidden border-t border-[#6e8f9e] bg-linear-to-b from-[#9db9c4] to-white text-[8px] text-[#202020]">
      <button aria-label="List" className="w-1 shrink-0"><svg viewBox="0 0 4 12" className="h-3 w-1" stroke="#303030"><path d="M0 1.500h3M0 5.500h3M0 10.500h3" /></svg></button>
      <div className="grid flex-1 auto-cols-fr grid-flow-col">
        {tools.map(([name, art]) => (
          <button key={name} aria-label={name} className="flex min-w-0 items-center justify-center"><Icon>{art}</Icon></button>
        ))}
      </div>
      <div className="flex shrink-0 items-center gap-px">
        <NumberBox label="Units" value="3401" />
        <UnitSelect label="Unit type" text="(x) units" />
        <NumberBox label="Interval" value="12" />
        <UnitSelect label="Interval type" text="(x) minutes" />
        <div className="flex h-5 items-center rounded-xs border border-[#8a9cd0] bg-white">
          <button aria-label="Indicators">
            <svg viewBox="0 0 26 18" className="h-[18px] w-[26px]" fill="none">
              <path d="M2 5h2V2h4v3h3v3H8v3H4V8H2z" fill="#fff" stroke="#888" />
              <path d="M3 13l5-9 6 6 4-7 3 5 4-5" stroke="#e03040" strokeWidth="1.500" />
              <path d="M2 11l8-6 7 8 7-10" stroke="#30a040" />
              <path d="M2 16h3v-2h3v2h3v-3h3v3h3v-2h3v2h4v-4" stroke="#18b020" strokeWidth="2.500" />
            </svg>
          </button>
          <button aria-label="Indicator menu" className="flex h-full w-2.5 items-center justify-center border-l border-[#9ab0ba]"><svg viewBox="0 0 6 4" className="h-1 w-1.5"><path d="M0 0h6L3 4z" /></svg></button>
        </div>
        <button aria-label="Trade panel" className="ml-1 flex h-5 w-3 items-center rounded-l-lg border border-r-0 border-[#9ab0ba] bg-white">
          <svg viewBox="0 0 12 18" className="h-[18px] w-3"><path d="M3 5v7L0 9z" fill="#181818" /><path d="M11 2C7 2 7 4 7 6H5l3 4 3-4H9V4h2z" fill="#e02020" /><path d="M5 16c4 0 4-1 4-4H7l3-4 2 3v1c0 4-2 6-7 6z" fill="#18a020" /></svg>
        </button>
      </div>
    </div>
  );
}

function BottomBar() {
  return (
    <footer className="flex h-[23px] items-center border-t border-[#a8bcc4] bg-linear-to-b from-[#b4d0da] to-[#9dbccb] pr-1 pl-px text-[8px]">
      <button className="flex h-[17px] w-[41px] shrink-0 items-center justify-center gap-1 rounded-xs border border-[#2070b0] bg-linear-to-b from-[#38a0e4] to-[#1c80cc] text-[8px] font-bold text-white">
        <Icon className="size-2.5"><path d="M13 3L4 8l9 5" stroke="#fff" strokeWidth="2" /><g fill="#fff" stroke="none"><circle cx="13" cy="3" r="3" /><circle cx="3" cy="8" r="3" /><circle cx="13" cy="13" r="3" /></g></Icon>
        Share
      </button>
      <div className="ml-1.5 flex shrink-0 items-center gap-2">
        <button aria-label="Link"><Icon className="size-3"><ellipse cx="7" cy="4" rx="3.500" ry="3" strokeWidth="2" /><path d="M7 5v6" strokeWidth="3" /><ellipse cx="7" cy="12" rx="3.500" ry="3" strokeWidth="2" /><path d="M10 13h6l-3 3z" fill="#222" /></Icon></button>
        <button aria-label="Notes"><Icon className="size-3"><path d="M1 1h14v14H1z" fill="#fff" strokeWidth="2" /><path d="M3 5h8M3 8h10M3 11h6" stroke="#555" /><path d="M4 12l4-5 3 3 3-6" strokeWidth="2" /><path d="M11 3h4" stroke="#e02020" strokeWidth="2" /><path d="M1 14h4" stroke="#20b020" strokeWidth="2" /></Icon></button>
        <button aria-label="Order book"><Icon className="size-3.5"><g strokeWidth="3"><path d="M1 3h7M3 8h5M0 13h8" stroke="#30b040" /><path d="M8 3h5M8 8h8M8 13h5" stroke="#d85050" /></g><path d="M8 1v14M2 5h10M2 10h12" stroke="#444" /></Icon></button>
      </div>
      <div className="ml-1 flex h-3 flex-1 items-center border border-[#86a4b2] bg-[#9bb8c5]">
        <button aria-label="Scroll left" className="flex h-3 w-2.5 items-center justify-center rounded-xs border border-[#86a4b2] bg-[#cfe2ea]"><svg viewBox="0 0 4 6" className="h-1.5 w-1"><path d="M4 0v6L0 3z" /></svg></button>
        <button aria-label="Scroll position" className="ml-auto flex h-3 w-[68px] flex-col items-center justify-center gap-0.5 rounded-xs border border-[#7f9fae] bg-linear-to-b from-[#c4dce6] to-[#a4c2d0]"><span className="h-px w-1 bg-[#6a8c9c]" /><span className="h-px w-1 bg-[#6a8c9c]" /></button>
        <button aria-label="Scroll right" className="flex h-3 w-2.5 items-center justify-center rounded-xs border border-[#86a4b2] bg-[#cfe2ea]"><svg viewBox="0 0 4 6" className="h-1.5 w-1"><path d="M0 0v6l4-3z" /></svg></button>
      </div>
      <div className="ml-1.5 flex shrink-0 gap-[7px]">
        <button aria-label="Chart settings"><Icon className="size-3.5"><path d="M8 1h7v13H8z" fill="#30b840" stroke="#208030" /><path d="M2 13l7-6" stroke="#444" strokeWidth="5" /><path d="M2 13l7-6" stroke="#ddd" strokeWidth="2" /><path d="M13 3c-5-1-6 5-2 5 2 0 3-2 3-3l-3 1z" fill="#ddd" /><circle cx="4" cy="12" r="2" stroke="#d03030" /></Icon></button>
        <button aria-label="Fit zoom"><Icon className="size-3.5"><circle cx="6" cy="6" r="4.500" fill="#ddd" stroke="#555" strokeWidth="1.500" /><path d="M9 9l5 5" strokeWidth="2.500" /><path d="M14 1v7M12 3l2-2 2 2M12 6l2 2 2-2M1 14h7M3 12l-2 2 2 2M6 12l2 2-2 2" stroke={blue} /></Icon></button>
        <button aria-label="Zoom out"><Icon className="size-3.5"><circle cx="6" cy="6" r="4.500" fill="#eee" stroke="#666" strokeWidth="1.500" /><path d="M9 9l6 6" stroke="#181818" strokeWidth="3" /><path d="M3 6h6" stroke={blue} strokeWidth="2" /></Icon></button>
        <button aria-label="Zoom in"><Icon className="size-3.5"><circle cx="6" cy="6" r="4.500" fill="#eee" stroke="#666" strokeWidth="1.500" /><path d="M9 9l6 6" stroke="#181818" strokeWidth="3" /><path d="M3 6h6M6 3v6" stroke={blue} strokeWidth="2" /></Icon></button>
      </div>
    </footer>
  );
}

export default function App() {
  return (
    <div className="flex min-h-screen flex-col bg-[#4a86e8] font-['Liberation_Sans',Arial,sans-serif]">
      <TitleBar />
      <main className="flex flex-1 flex-col px-[3px] pb-[3px]">
        <OrdersBar />
        <Toolbar />
        <Chart />
        <BottomBar />
      </main>
    </div>
  );
}
